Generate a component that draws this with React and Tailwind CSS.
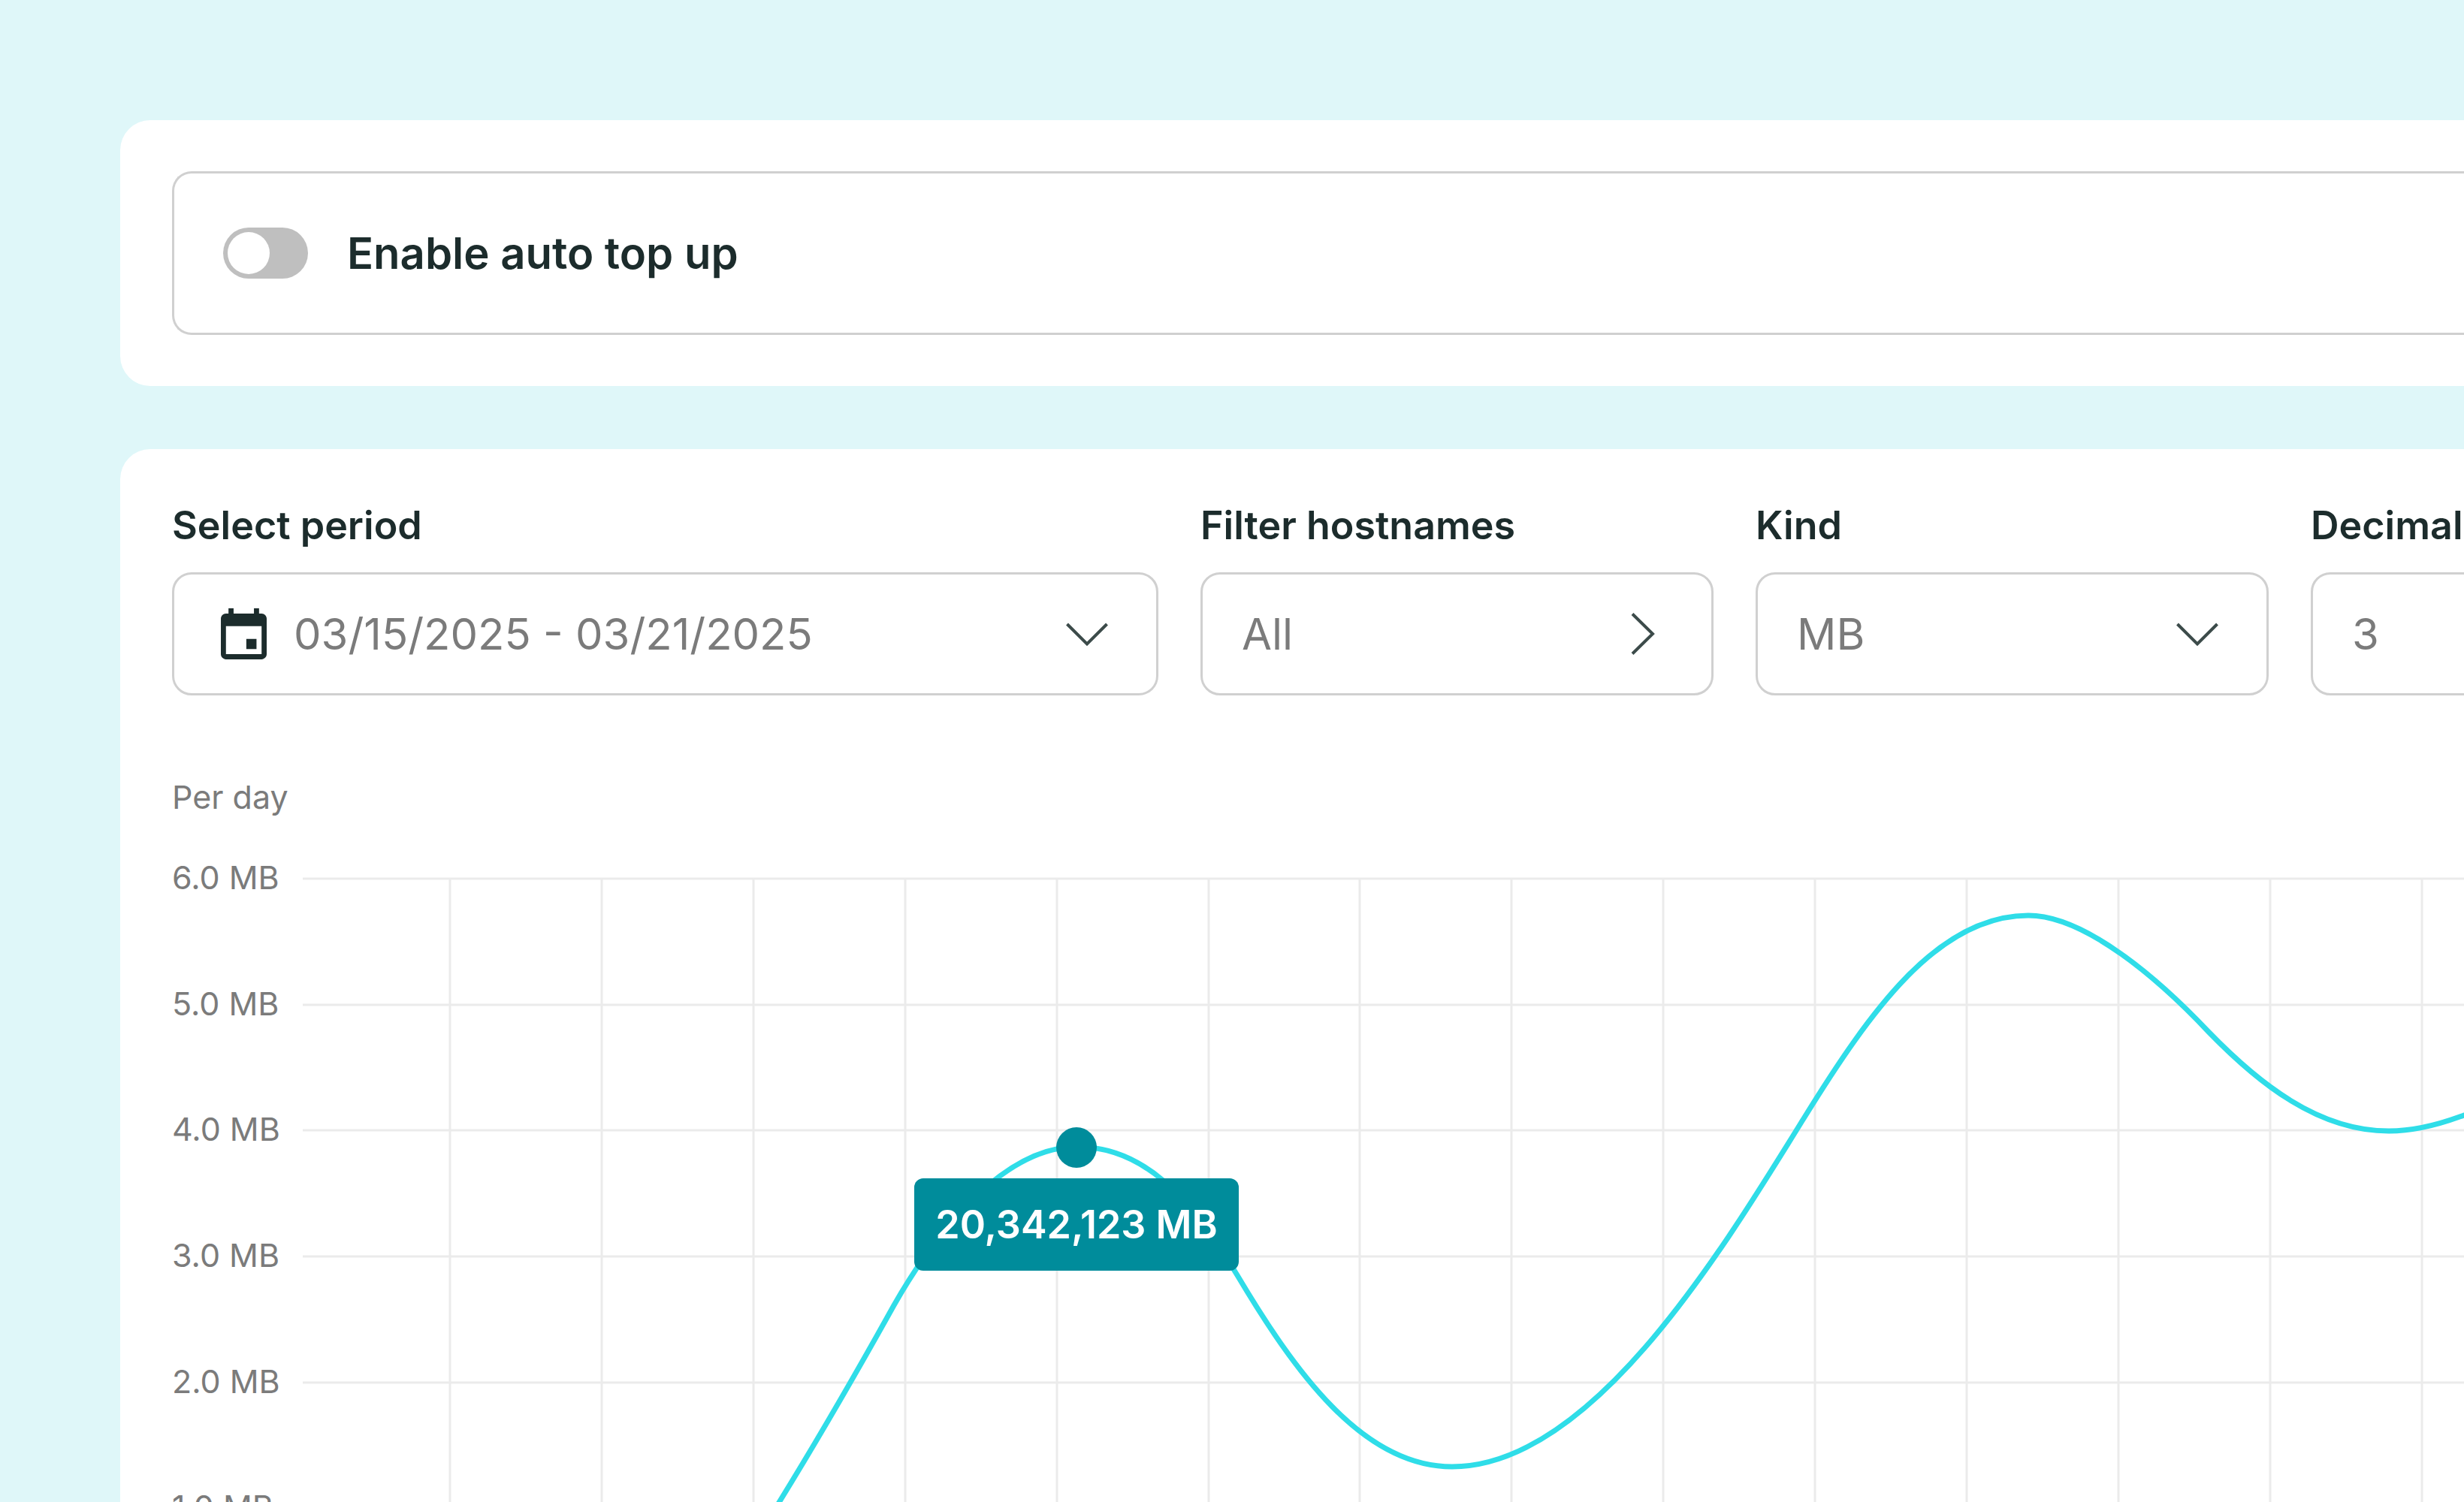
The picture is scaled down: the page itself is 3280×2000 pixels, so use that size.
import { useState } from 'react';

const AXIS_LABELS = ['6.0 MB', '5.0 MB', '4.0 MB', '3.0 MB', '2.0 MB', '1.0 MB', '0.0 MB'];

// Plot coordinates: x to the right, y down from the 6.0 MB line.
const USAGE_CURVE = [
  'M617 858',
  'C672 770 737 658 787 568',
  'C847 463 936 357 1031 357',
  'C1116 357 1179 419 1244 528',
  'C1319 654 1410 783 1530 783',
  'C1715 783 1887 499 1997 321',
  'C2087 175 2177 49 2297 49',
  'C2372 49 2469 132 2537 204',
  'C2602 271 2682 336 2777 336',
  'C2837 336 2897 310 2997 260',
].join(' ');

const VERTICALS = Array.from({ length: 15 }, (_, i) => Math.round(196 + i * 201.9));
const PLOT_HEIGHT = 1006;
const HORIZONTALS = Array.from({ length: 7 }, (_, i) => Math.round((i * PLOT_HEIGHT) / 6));

function ChevronDown() {
  return (
    <svg viewBox="0 0 56 56" className="size-14 shrink-0" fill="none" stroke="#3c4b4a" strokeWidth="4" aria-hidden="true">
      <path d="M1.500 15 28 41.500 54.500 15" />
    </svg>
  );
}

function ChevronRight() {
  return (
    <svg viewBox="0 0 56 56" className="size-14 shrink-0" fill="none" stroke="#3c4b4a" strokeWidth="4" aria-hidden="true">
      <path d="M15 1.500 42 28 15 54.500" />
    </svg>
  );
}

function CalendarIcon() {
  return (
    <svg viewBox="3 1 18 20" className="h-[68px] w-[61px] shrink-0" fill="#1c2c2c" aria-hidden="true">
      <path d="M17 13h-4v4h4v-4zM16 1v2H8V1H6v2H5c-1.110 0-1.990.9-1.990 2L3 19c0 1.100.890 2 2 2h14c1.100 0 2-.9 2-2V5c0-1.100-.9-2-2-2h-1V1h-2zm3 18H5V8h14v11z" />
    </svg>
  );
}

function Field({ id, label, className, children }) {
  return (
    <div className={`flex shrink-0 flex-col gap-8 ${className}`}>
      <label htmlFor={id} className="text-[52px] leading-[60px] font-semibold whitespace-nowrap">
        {label}
      </label>
      {children}
    </div>
  );
}

const CONTROL = 'flex h-[164px] w-full items-center rounded-[26px] border-[3px] border-[#d0d0d0] bg-white pr-16 text-left text-[58px] text-[#7b7b7b]';

function SelectBox({ id, options }) {
  return (
    <div className="relative">
      <select id={id} className="h-[164px] w-full appearance-none rounded-[26px] border-[3px] border-[#d0d0d0] bg-white pr-32 pl-[52px] text-[58px] text-[#7b7b7b]">
        {options.map((option) => (
          <option key={option}>{option}</option>
        ))}
      </select>
      <div className="pointer-events-none absolute inset-y-0 right-[67px] flex items-center">
        <ChevronDown />
      </div>
    </div>
  );
}

function TopUpCard() {
  const [enabled, setEnabled] = useState(false);
  return (
    <section className="rounded-l-[40px] bg-white py-[68px] pl-[69px]">
      <label className="flex h-[218px] items-center gap-[52px] rounded-l-[26px] border-y-[3px] border-l-[3px] border-[#d0d0d0] pl-[65px] text-[58px] font-semibold">
        <input
          type="checkbox"
          role="switch"
          checked={enabled}
          onChange={(event) => setEnabled(event.target.checked)}
          className="flex h-[68px] w-[113px] shrink-0 appearance-none items-center rounded-full bg-[#bfbfbf] px-[6px] before:size-[56px] before:rounded-full before:bg-white checked:justify-end checked:bg-[#008c9b]"
        />
        Enable auto top up
      </label>
    </section>
  );
}

function UsageChart() {
  return (
    <div className="flex gap-7 text-[43px] leading-[50px] text-[#7b7b7b]">
      <div className="-mt-[27px] flex h-[1056px] w-[146px] shrink-0 flex-col justify-between whitespace-nowrap">
        {AXIS_LABELS.map((label) => (
          <span key={label}>{label}</span>
        ))}
      </div>
      <div className="relative shrink-0">
        <svg width="3000" height={PLOT_HEIGHT} className="block overflow-visible" role="img" aria-label="Usage per day">
          <g stroke="#ebebeb" strokeWidth="3">
            {HORIZONTALS.map((y) => (
              <line key={y} x1="0" x2="3000" y1={y} y2={y} />
            ))}
            {VERTICALS.map((x) => (
              <line key={x} x1={x} x2={x} y1="0" y2={PLOT_HEIGHT} />
            ))}
          </g>
          <path d={USAGE_CURVE} fill="none" stroke="#2fdde8" strokeWidth="7" />
          <circle cx="1030" cy="358" r="27" fill="#008c9b" />
        </svg>
        <div className="absolute top-[399px] left-[1030px] flex h-[123px] w-[432px] -translate-x-1/2 items-center justify-center rounded-xl bg-[#008c9b] text-[52px] font-semibold whitespace-nowrap text-white">
          20,342,123 MB
        </div>
      </div>
    </div>
  );
}

export default function App() {
  return (
    <main className="flex h-screen flex-col gap-[84px] overflow-hidden bg-[#dff7f9] pt-40 pl-40 font-['Inter',sans-serif] text-[#1c2c2c]">
      <TopUpCard />
      <section className="rounded-tl-[40px] bg-white pt-[72px] pl-[69px]">
        <div className="flex gap-14">
          <Field id="period" label="Select period" className="w-[1313px]">
            <button id="period" type="button" className={`${CONTROL} pl-[62px]`}>
              <CalendarIcon />
              <span className="ml-9 grow whitespace-nowrap">03/15/2025 - 03/21/2025</span>
              <ChevronDown />
            </button>
          </Field>
          <Field id="hostnames" label="Filter hostnames" className="w-[683px]">
            <button id="hostnames" type="button" className={`${CONTROL} pl-[52px]`}>
              <span className="grow">All</span>
              <ChevronRight />
            </button>
          </Field>
          <Field id="kind" label="Kind" className="w-[683px]">
            <SelectBox id="kind" options={['MB', 'GB', 'TB']} />
          </Field>
          <Field id="decimal" label="Decimal" className="w-[683px]">
            <SelectBox id="decimal" options={['3', '2', '1', '0']} />
          </Field>
        </div>
        <h2 className="mt-[110px] mb-[84px] text-[43px] leading-[50px] text-[#7b7b7b]">Per day</h2>
        <UsageChart />
      </section>
    </main>
  );
}
